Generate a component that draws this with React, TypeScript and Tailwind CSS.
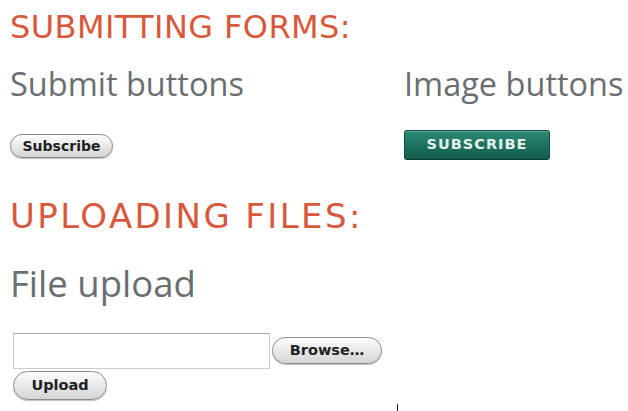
import React from 'react';

const heading = "leading-[30px] text-[#d8583b] font-['DejaVu_Sans',sans-serif]";
const subhead = "font-['Open_Sans',sans-serif] text-[#6a6e71]";

const AquaButton: React.FC<{ label: string; className?: string }> = ({ label, className = '' }) => (
  <button
    type="button"
    className={`flex items-center justify-center rounded-full border-[1.5px] border-[#8a8a8a] bg-gradient-to-b from-[#fdfdfd] via-[#e9e9e9] to-[#d4d4d4] font-['DejaVu_Sans',sans-serif] font-bold text-[#222] shadow-[inset_0_1px_1px_rgba(255,255,255,0.9),0_1px_1px_rgba(0,0,0,0.25)] ${className}`}
  >
    {label}
  </button>
);

export default function App() {
  return (
    <div className="relative h-[411px] w-[628px] overflow-hidden bg-white pl-[10px]">
      <h2 className={`${heading} mt-[12px] text-[32px] tracking-[0.4px]`}>SUBMITTING FORMS:</h2>

      <div className="mt-[25px] flex">
        <div className="w-[394px]">
          <h3 className={`${subhead} text-[32.5px] leading-[34px]`}>Submit buttons</h3>
          <AquaButton label="Subscribe" className="mt-[33px] h-[24px] w-[103px] text-[14px]" />
        </div>
        <div>
          <h3 className={`${subhead} text-[32.5px] leading-[34px]`}>Image buttons</h3>
          <button
            type="button"
            className="mt-[29px] flex h-[30px] w-[146px] items-center justify-center rounded-[3px] border border-[#0f4d40] border-b-[#0a3b31] bg-gradient-to-b from-[#2b8a74] to-[#125c4c] font-['DejaVu_Sans',sans-serif] text-[14.5px] font-bold tracking-[1px] text-[#e4f1ec] shadow-[inset_0_1px_0_rgba(255,255,255,0.25)]"
          >
            SUBSCRIBE
          </button>
        </div>
      </div>

      <h2 className={`${heading} mt-[41px] text-[34px] tracking-[2.4px]`}>UPLOADING FILES:</h2>

      <h3 className={`${subhead} mt-[33px] text-[36.5px] leading-[38px]`}>File upload</h3>

      <div className="mt-[31px] flex items-start pl-[3px]">
        <div className="h-[36px] w-[257px] border border-[#cdcdcd] border-t-[#a9a9a9] bg-white" />
        <AquaButton label="Browse…" className="ml-[2px] mt-[4px] h-[27px] w-[110px] text-[14.5px]" />
      </div>
      <AquaButton label="Upload" className="ml-[3px] mt-[2px] h-[29px] w-[94px] text-[14.5px]" />

      <div className="absolute left-[397px] top-[404px] h-[7px] w-px bg-[#222]" />
    </div>
  );
}
